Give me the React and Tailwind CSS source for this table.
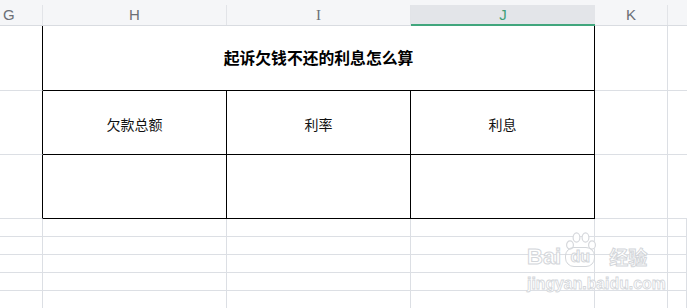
import React from "react";

const cols = ["w-[43px]", "w-[184px]", "w-[184px]", "w-[184px]", "w-[73px]", "flex-1"];

export default function App() {
  const gray = "border-[#dcdfe4]";
  const cjk = "font-['Noto_Sans_CJK_SC',sans-serif]";
  const emptyRow = (key) => (
    <div key={key} className="flex h-[18px]">
      {cols.map((c, i) => (
        <div key={i} className={`${c} shrink-0 border-r border-b ${gray}`} />
      ))}
    </div>
  );
  return (
    <div className="relative w-[687px] h-[308px] overflow-hidden bg-white font-['Liberation_Sans',sans-serif]">
      {/* column header */}
      <div className="bg-[#f5f6f8] pt-[5px]">
        <div className="flex h-[21px] border-b border-[#d9dce1] text-[15px] text-[#6b6f76]">
          <div className="w-[43px] shrink-0 border-r border-[#e2e4e8] pl-[3px] leading-[20px]">G</div>
          <div className="w-[184px] shrink-0 border-r border-[#e2e4e8] text-center leading-[20px]">H</div>
          <div className="w-[184px] shrink-0 border-r border-[#e2e4e8] text-center leading-[20px] font-['Liberation_Serif',serif]">I</div>
          <div className="w-[184px] shrink-0 relative bg-[#e3e5e9] text-center leading-[20px] text-[#3f9f78]">
            J
            <div className="absolute left-0 right-0 bottom-[-1px] h-[2px] bg-[#41a67d]" />
          </div>
          <div className="w-[73px] shrink-0 border-r border-[#e2e4e8] text-center leading-[20px]">K</div>
          <div className="flex-1" />
        </div>
      </div>

      {/* row 1: merged title */}
      <div className="flex h-[65px]">
        <div className={`w-[43px] shrink-0 border-r border-r-black border-b ${gray}`} />
        <div className={`w-[552px] shrink-0 border-r border-b border-black flex items-center justify-center ${cjk} font-bold text-[15.8px] text-black`}>
          起诉欠钱不还的利息怎么算
        </div>
        <div className={`w-[73px] shrink-0 border-r border-b ${gray}`} />
        <div className={`flex-1 border-b ${gray}`} />
      </div>

      {/* row 2: labels */}
      <div className="flex h-[64px]">
        <div className={`w-[43px] shrink-0 border-r border-r-black border-b ${gray}`} />
        {["欠款总额", "利率", "利息"].map((t) => (
          <div key={t} className={`w-[184px] shrink-0 border-r border-b border-black flex items-center justify-center pt-[3px] ${cjk} text-[14px] text-[#111]`}>
            {t}
          </div>
        ))}
        <div className={`w-[73px] shrink-0 border-r border-b ${gray}`} />
        <div className={`flex-1 border-b ${gray}`} />
      </div>

      {/* row 3: empty table row */}
      <div className="flex h-[64px]">
        <div className={`w-[43px] shrink-0 border-r border-r-black border-b ${gray}`} />
        {[0, 1, 2].map((i) => (
          <div key={i} className="w-[184px] shrink-0 border-r border-b border-black" />
        ))}
        <div className={`w-[73px] shrink-0 border-r border-b ${gray}`} />
        <div className={`flex-1 border-b ${gray}`} />
      </div>

      {[0, 1, 2, 3, 4].map((k) => emptyRow(k))}

      {/* Baidu watermark */}
      <div className="absolute left-[527px] top-[232px] w-[124px] pointer-events-none select-none">
        <div className="relative h-[36px]">
          <svg className="absolute left-[37px] top-0" width="34" height="22" viewBox="0 0 34 22" fill="none" stroke="#d6d8dc" strokeWidth="1.2">
            <ellipse cx="6" cy="13" rx="3.4" ry="4.2" fill="#fff" />
            <ellipse cx="12.5" cy="5.5" rx="3.4" ry="4.6" fill="#fff" />
            <ellipse cx="21.5" cy="5.5" rx="3.4" ry="4.6" fill="#fff" />
            <ellipse cx="28" cy="13" rx="3.4" ry="4.2" fill="#fff" />
          </svg>
          <div className="absolute left-0 top-[15px] flex items-end font-['Liberation_Sans',sans-serif] font-bold text-[22px] leading-[20px] text-white [-webkit-text-stroke:1px_#d3d6da]">
            <span>Bai</span>
            <span className="ml-[4px] w-[30px] text-center rounded-[9px] border border-[#d3d6da] text-[16px] leading-[18px]">du</span>
            <span className={`ml-[14px] ${cjk} text-[19px] leading-[20px]`}>经验</span>
          </div>
        </div>
        <div className="mt-[9px] text-[15.8px] leading-[14px] font-bold text-white [-webkit-text-stroke:0.8px_#d3d6da] font-['Liberation_Sans',sans-serif]">
          jingyan.baidu.com
        </div>
      </div>
    </div>
  );
}
